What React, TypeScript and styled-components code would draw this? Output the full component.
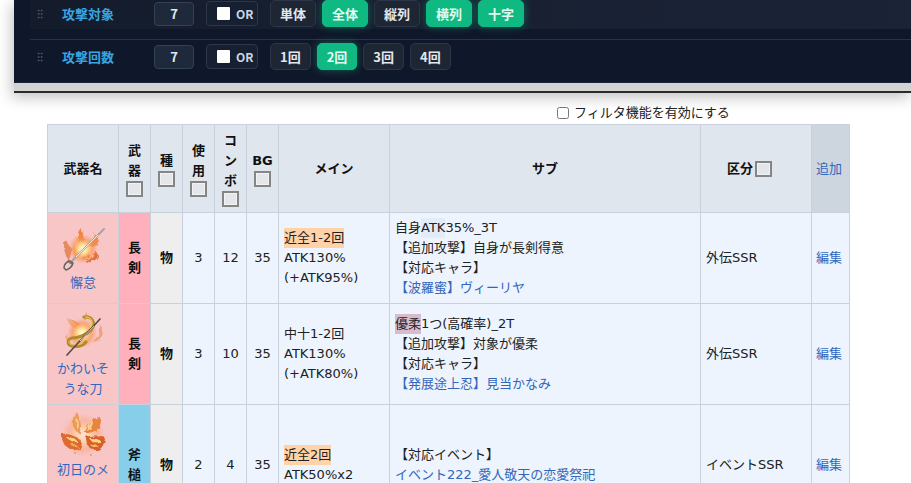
import React from "react";
import styled, { createGlobalStyle } from "styled-components";
import { GripVertical } from "lucide-react";

const GlobalStyle = createGlobalStyle`
  html, body {
    margin: 0;
    height: 483px;
    overflow: hidden;
    background: #fff;
    font-family: "DejaVu Sans", "Noto Sans CJK JP", sans-serif;
    font-size: 13px;
    color: #202122;
  }
`;

const Frame = styled.div`
  margin-left: 14px;
  height: 93px;
  box-sizing: border-box;
  background: linear-gradient(#b8baba, #d4d4d4);
  border-bottom: 2px solid #2b2b2b;
  box-shadow: -2px 4px 14px rgba(0, 0, 0, 0.25);
`;

const Panel = styled.div`
  height: 83px;
  box-sizing: border-box;
  padding-left: 16px;
  background: #0f172a;
  border-bottom: 1px solid #1b2438;
  font-family: "Noto Sans CJK JP", sans-serif;
`;

const Row = styled.div<{ $first?: boolean }>`
  display: flex;
  align-items: center;
  gap: 12px;
  padding-left: 8px;
  ${(p) =>
    p.$first
      ? `height: 29px; padding-bottom: 2px; box-sizing: border-box; margin-bottom: 10px;
         background: linear-gradient(90deg, #141c2c, #1b2437);`
      : `height: 27px; margin-top: 3px;`}
`;

const Divider = styled.div`
  height: 1px;
  background: #2a3346;
`;

const Handle = styled.span`
  display: flex;
  width: 12px;
  margin-left: -4px;
  color: #4a5568;
`;

const Label = styled.span`
  width: 80px;
  margin-left: 4px;
  font-size: 13px;
  font-weight: 700;
  color: #38a6e0;
`;

const NumBox = styled.div`
  box-sizing: border-box;
  width: 40px;
  height: 24px;
  display: flex;
  align-items: center;
  justify-content: center;
  background: #1e293b;
  border: 1px solid #334155;
  border-radius: 4px;
  color: #e2e8f0;
  font-size: 13px;
  font-weight: 700;
`;

const OrBox = styled.div`
  box-sizing: border-box;
  width: 52px;
  height: 25px;
  display: flex;
  align-items: center;
  gap: 6px;
  padding-left: 10px;
  background: #172031;
  border: 1px solid #2d374a;
  border-radius: 4px;
  color: #cbd5e1;
  font-size: 12px;
  font-weight: 700;
`;

const WhiteCheck = styled.span`
  width: 13px;
  height: 13px;
  background: #fff;
  border-radius: 1px;
`;

const BtnGroup = styled.div`
  display: flex;
  gap: 6px;
`;

const ToggleBtn = styled.div<{ $on?: boolean }>`
  box-sizing: border-box;
  height: 27px;
  padding: 0 9px;
  display: flex;
  align-items: center;
  border-radius: 5px;
  font-size: 13px;
  font-weight: 700;
  border: 1px solid ${(p) => (p.$on ? "#10b981" : "#2d3648")};
  background: ${(p) => (p.$on ? "#10b981" : "#1e2533")};
  color: ${(p) => (p.$on ? "#e4fbf2" : "#e2e8f0")};
  box-shadow: ${(p) => (p.$on ? "0 0 8px rgba(16, 185, 129, 0.45)" : "none")};
`;

const FilterLine = styled.label`
  display: flex;
  align-items: center;
  height: 31px;
  padding: 10px 0 1px 557px;
  box-sizing: border-box;
  line-height: 20px;
`;

const FilterCheck = styled.input`
  width: 12px;
  height: 12px;
  margin: 0 5px 0 0;
`;

const Table = styled.table`
  margin-left: 47px;
  width: 802px;
  table-layout: fixed;
  border-collapse: collapse;
  line-height: 20px;
  background: #edf4fd;
`;

const Th = styled.th<{ $last?: boolean }>`
  height: 87px;
  padding: 0 ${(p) => (p.$last ? "4px" : "5px")};
  border: 1px solid #c8d1dc;
  background: ${(p) => (p.$last ? "#cdd6df" : "#dfe6ee")};
  font-weight: 700;
  color: #111;
  text-align: ${(p) => (p.$last ? "left" : "center")};
`;

const Td = styled.td<{ $center?: boolean }>`
  padding: 5px;
  border: 1px solid #c8d1dc;
  text-align: ${(p) => (p.$center ? "center" : "left")};
  background: #edf4fd;
  overflow: hidden;
`;

const EditCell = styled(Td)`
  padding-left: 4px;
`;

const NameCell = styled(Td)<{ $tall?: boolean }>`
  background: #f9c6c8;
  text-align: center;
  ${(p) => p.$tall && "height: 110px; vertical-align: top;"}
`;

const KindCell = styled(Td)<{ $color: string }>`
  background: ${(p) => p.$color};
  font-weight: 700;
  color: #111;
  text-align: center;
`;

const TypeCell = styled(Td)`
  background: #eeeeee;
  font-weight: 700;
  color: #111;
  text-align: center;
`;

const FilterBox = styled.span<{ $inline?: boolean }>`
  display: ${(p) => (p.$inline ? "inline-block" : "block")};
  box-sizing: border-box;
  width: 17px;
  height: 16px;
  margin: ${(p) => (p.$inline ? "0 13px 0 2px" : "0 auto")};
  vertical-align: middle;
  border: 2px solid #858585;
  background: #e3e6ea;
  box-shadow: inset 0 0 0 1px #f0f2f4;
`;

const Link = styled.a`
  color: #3366bb;
  text-decoration: none;
`;

const AddLink = styled(Link)`
  font-weight: 400;
`;

const Mark = styled.span<{ $color: string }>`
  display: inline-block;
  line-height: 20px;
  background: ${(p) => p.$color};
`;

const IconWrap = styled.svg`
  display: block;
  width: 50px;
  height: 50px;
  margin: 0 auto;
`;

const Defs = ({ id }: { id: string }) => (
  <defs>
    <radialGradient id={`${id}-glow`}>
      <stop offset="0%" stopColor="#fffdf0" />
      <stop offset="30%" stopColor="#ffdf90" />
      <stop offset="65%" stopColor="#f89450" stopOpacity="0.65" />
      <stop offset="100%" stopColor="#f89450" stopOpacity="0" />
    </radialGradient>
    <filter id={`${id}-flame`} x="-10%" y="-10%" width="120%" height="120%">
      <feTurbulence type="fractalNoise" baseFrequency="0.16" numOctaves="2" seed="4" />
      <feDisplacementMap in="SourceGraphic" scale="5" />
      <feGaussianBlur stdDeviation="0.45" />
    </filter>
    <filter id={`${id}-soft`}>
      <feGaussianBlur stdDeviation="0.35" />
    </filter>
  </defs>
);

const SwordIcon = () => (
  <IconWrap viewBox="0 0 50 50">
    <Defs id="a" />
    <g filter="url(#a-flame)">
      <path d="M7 16c-2 8-1 14 4 21 2-5 2-9 4-11-4-3-6-5-8-10z" fill="#e58a5c" />
      <path d="M16 22c-1 5 0 9 3 13 2-2 2-6 1-9z" fill="#f0a070" />
      <path d="M24 6c-4 5-5 9-3 15 3-1 5-2 6-5-2-3-3-6-3-10z" fill="#ee8440" />
      <path d="M37 11c-1 5-3 9-6 12 4 2 8 0 9-4 0-2-1-5-3-8z" fill="#ef8a4a" />
      <path d="M36 27c0 5-3 9-9 12 6 1 11-1 13-6 0-2-2-5-4-6z" fill="#e56f36" />
      <path d="M16 12c1 4 3 7 7 9-1-4-3-7-7-9z" fill="#f7b98a" />
      <path d="M30 30c-1 3-3 5-6 6 3 1 7 0 8-3z" fill="#d95a28" />
    </g>
    <circle cx="25" cy="26" r="15" fill="url(#a-glow)" />
    <g filter="url(#a-soft)">
      <path d="M12 40L46 6" stroke="#a8a598" strokeWidth="2" strokeLinecap="round" />
      <path d="M18 34L40 12" stroke="#f6f3e8" strokeWidth="0.9" />
      <path d="M6 45c0-3 2-6 6-7l3 2c-1 4-4 6-7 7z" fill="none" stroke="#66625c" strokeWidth="1.5" />
      <path d="M10 37l4 4" stroke="#77736c" strokeWidth="1.8" />
    </g>
  </IconWrap>
);

const BowIcon = () => (
  <IconWrap viewBox="0 0 50 50">
    <Defs id="b" />
    <g filter="url(#b-flame)" opacity="0.9">
      <path d="M8 9c3 7 6 10 12 11-1-5-5-10-12-11z" fill="#f2a878" />
      <path d="M28 2c-3 3-3 7-1 10 2-2 3-6 1-10z" fill="#f09a60" />
      <path d="M41 15c1 7-1 14-7 18 6 0 11-5 11-11 0-3-2-5-4-7z" fill="#ee9c78" />
      <path d="M7 24c0 4 1 8 4 10 0-3 0-7-4-10z" fill="#f2a878" />
      <path d="M15 12c2 3 4 5 8 5-2-3-4-5-8-5z" fill="#ee8a48" />
    </g>
    <circle cx="24" cy="24" r="15" fill="url(#b-glow)" />
    <g filter="url(#b-soft)">
      <path
        d="M26 8c9-1 12 7 7 13-5 5-13 8-19 8-5 1-5 7 0 8 5 1 11 0 14-4"
        fill="none"
        stroke="#b38a2c"
        strokeWidth="3.2"
        strokeLinecap="round"
      />
      <path d="M27 8c7 0 9 6 5 11" fill="none" stroke="#f0cd62" strokeWidth="1.2" />
      <path d="M13 31c-3 1-3 4 1 5 4 0 8 0 11-2" fill="none" stroke="#e8c25c" strokeWidth="1" />
      <path d="M9 46L42 10" stroke="#55504a" strokeWidth="1.7" strokeLinecap="round" />
      <path d="M22 32L36 17" stroke="#ece4d0" strokeWidth="0.8" />
    </g>
  </IconWrap>
);

const WingIcon = () => (
  <IconWrap viewBox="0 0 50 50">
    <Defs id="c" />
    <circle cx="25" cy="25" r="22" fill="url(#c-glow)" opacity="0.5" />
    <g filter="url(#c-flame)">
      <path d="M19 2c-3 5-6 11-3 16 1 3 4 5 7 6 1-7-1-16-4-22z" fill="#ee9a58" />
      <path d="M43 8c-7 1-14 6-16 15 6 0 12-2 14-6 2-3 2-6 2-9z" fill="#e98440" />
      <path d="M4 24c-1 7 3 14 11 16 5 1 9-3 9-8-4-5-13-9-20-8z" fill="#dd6a30" />
      <path d="M28 27c0 6 3 13 9 13 6 1 10-6 10-13-6-2-13-2-19 0z" fill="#d9602a" />
      <path d="M8 27c3 3 7 6 12 5-2-3-7-5-12-5z" fill="#fcd27a" />
      <path d="M12 34c2 2 5 4 8 3-1-2-4-4-8-3z" fill="#f6a655" />
      <path d="M31 28c2 4 7 6 12 3-3-2-7-3-12-3z" fill="#fbd98a" />
      <path d="M32 35c2 2 5 3 8 1-2-2-5-2-8-1z" fill="#fbb765" />
      <path d="M35 11c-3 2-5 5-6 10 4-2 6-6 6-10z" fill="#fbd08a" />
      <path d="M19 8c-1 4-1 8 1 12 1-4 1-8-1-12z" fill="#fbd08a" />
    </g>
    <circle cx="17" cy="43" r="0.9" fill="#e89458" />
    <circle cx="33" cy="45" r="0.9" fill="#e89458" />
    <circle cx="25" cy="41" r="0.7" fill="#f0b070" />
  </IconWrap>
);

const attackTargets = [
  { label: "単体" },
  { label: "全体", on: true },
  { label: "縦列" },
  { label: "横列", on: true },
  { label: "十字", on: true },
];

const attackCounts = [
  { label: "1回" },
  { label: "2回", on: true },
  { label: "3回" },
  { label: "4回" },
];

const colWidths = [71, 32, 32, 32, 32, 32, 111, 311, 111, 38];

const FilterRow = ({
  label,
  buttons,
  first,
}: {
  label: string;
  buttons: { label: string; on?: boolean }[];
  first?: boolean;
}) => (
  <Row $first={first}>
    <Handle>
      <GripVertical size={14} />
    </Handle>
    <Label>{label}</Label>
    <NumBox>7</NumBox>
    <OrBox>
      <WhiteCheck />
      OR
    </OrBox>
    <BtnGroup>
      {buttons.map((b) => (
        <ToggleBtn key={b.label} $on={b.on}>
          {b.label}
        </ToggleBtn>
      ))}
    </BtnGroup>
  </Row>
);

export default function App() {
  return (
    <>
      <GlobalStyle />
      <Frame>
        <Panel>
          <FilterRow first label="攻撃対象" buttons={attackTargets} />
          <Divider />
          <FilterRow label="攻撃回数" buttons={attackCounts} />
        </Panel>
      </Frame>
      <FilterLine>
        <FilterCheck type="checkbox" />
        フィルタ機能を有効にする
      </FilterLine>
      <Table>
        <colgroup>
          {colWidths.map((w, i) => (
            <col key={i} width={w} />
          ))}
        </colgroup>
        <thead>
          <tr>
            <Th>武器名</Th>
            <Th>
              武器
              <FilterBox />
            </Th>
            <Th>
              種
              <FilterBox />
            </Th>
            <Th>
              使用
              <FilterBox />
            </Th>
            <Th>
              コンボ
              <FilterBox />
            </Th>
            <Th>
              BG
              <FilterBox />
            </Th>
            <Th>メイン</Th>
            <Th>サブ</Th>
            <Th>
              区分
              <FilterBox $inline />
            </Th>
            <Th $last>
              <AddLink href="#">追加</AddLink>
            </Th>
          </tr>
        </thead>
        <tbody>
          <tr>
            <NameCell>
              <SwordIcon />
              <Link href="#">懈怠</Link>
            </NameCell>
            <KindCell $color="#ffb0bc">長剣</KindCell>
            <TypeCell>物</TypeCell>
            <Td $center>3</Td>
            <Td $center>12</Td>
            <Td $center>35</Td>
            <Td>
              <Mark $color="#ffd2a8">近全1-2回</Mark>
              <br />
              ATK130%
              <br />
              (+ATK95%)
            </Td>
            <Td>
              自身<Mark $color="#e2ecf8">ATK</Mark>35%_3T
              <br />
              【追加攻撃】自身が長剣得意
              <br />
              【対応キャラ】
              <br />
              <Link href="#">【波羅蜜】ヴィーリヤ</Link>
            </Td>
            <Td>外伝SSR</Td>
            <EditCell>
              <Link href="#">編集</Link>
            </EditCell>
          </tr>
          <tr>
            <NameCell>
              <BowIcon />
              <Link href="#">かわいそうな刀</Link>
            </NameCell>
            <KindCell $color="#ffb0bc">長剣</KindCell>
            <TypeCell>物</TypeCell>
            <Td $center>3</Td>
            <Td $center>10</Td>
            <Td $center>35</Td>
            <Td>
              中十1-2回
              <br />
              ATK130%
              <br />
              (+ATK80%)
            </Td>
            <Td>
              <Mark $color="#d8bccc">優柔</Mark>1つ(高確率)_2T
              <br />
              【追加攻撃】対象が優柔
              <br />
              【対応キャラ】
              <br />
              <Link href="#">【発展途上忍】見当かなみ</Link>
            </Td>
            <Td>外伝SSR</Td>
            <EditCell>
              <Link href="#">編集</Link>
            </EditCell>
          </tr>
          <tr>
            <NameCell $tall>
              <WingIcon />
              <Link href="#">初日のメ</Link>
            </NameCell>
            <KindCell $color="#87ceeb">斧槌</KindCell>
            <TypeCell>物</TypeCell>
            <Td $center>2</Td>
            <Td $center>4</Td>
            <Td $center>35</Td>
            <Td>
              <Mark $color="#ffd2a8">近全2回</Mark>
              <br />
              ATK50%x2
            </Td>
            <Td>
              【対応イベント】
              <br />
              <Link href="#">イベント222_愛人敬天の恋愛祭祀</Link>
            </Td>
            <Td>イベントSSR</Td>
            <EditCell>
              <Link href="#">編集</Link>
            </EditCell>
          </tr>
        </tbody>
      </Table>
    </>
  );
}
